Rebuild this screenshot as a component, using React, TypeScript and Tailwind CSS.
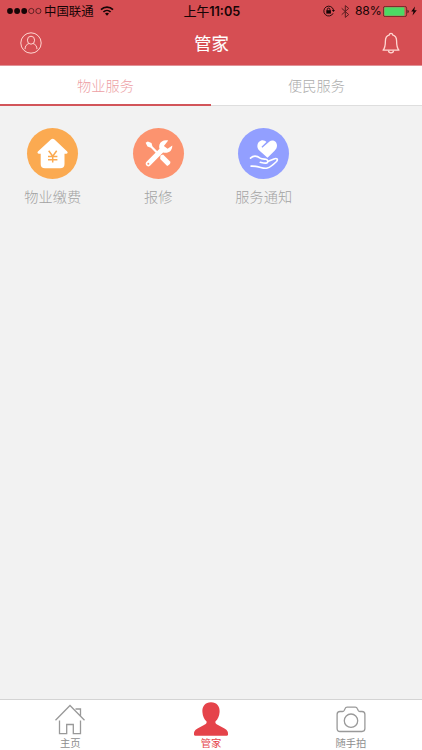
import type { ReactNode } from 'react';

interface Service {
  name: string;
  color: string;
  icon: ReactNode;
}

function StatusBar() {
  return (
    <div className="grid h-[21px] grid-cols-[1fr_auto_1fr] items-center text-[12px] leading-[20px] text-[#160506]">
      <div className="flex items-center pl-[7px]">
        <svg width="35" height="8" viewBox="0 0 35 8" fill="currentColor">
          <circle cx="3" cy="4" r="2.9" />
          <circle cx="10.1" cy="4" r="2.9" />
          <circle cx="17.2" cy="4" r="2.9" />
          <circle cx="24.3" cy="4" r="2.6" fill="none" stroke="currentColor" strokeWidth="0.6" />
          <circle cx="31.4" cy="4" r="2.6" fill="none" stroke="currentColor" strokeWidth="0.6" />
        </svg>
        <span className="ml-[2px] pt-[2px] text-[12.4px]">中国联通</span>
        <svg className="ml-[6px]" width="14" height="10" viewBox="0 0 14 10" fill="none" stroke="currentColor" strokeWidth="1.7">
          <path d="M1 3.6C4.3.3 9.7.3 13 3.6" />
          <path d="M3.4 6C5.4 4 8.6 4 10.6 6" />
          <path d="M7 9.7 5 7.6C6 6.6 8 6.6 9 7.6Z" fill="currentColor" stroke="none" />
        </svg>
      </div>
      <div className="pl-[2px] pt-px text-[12.7px] [-webkit-text-stroke:0.2px]">
        上午<span className="font-semibold [-webkit-text-stroke:0]">11:05</span>
      </div>
      <div className="flex items-center justify-end pr-[5px]">
        <svg width="12" height="12" viewBox="0 0 12 12" fill="none" stroke="currentColor">
          <path d="M10.1 8.3A4.9 4.9 0 1 1 10.5 5" strokeWidth="0.9" />
          <path d="M8.8 5h3.2l-1.6 2.1Z" fill="currentColor" stroke="none" />
          <rect x="3.3" y="5.2" width="4.6" height="3.4" fill="currentColor" stroke="none" />
          <path d="M4.3 5.5V4.4a1.3 1.3 0 0 1 2.6 0v1.1" strokeWidth="0.9" />
        </svg>
        <svg className="ml-[6px] opacity-65" width="9" height="13" viewBox="0 0 9 13" fill="none" stroke="currentColor" strokeWidth="1">
          <path d="m.7 3.3 7 6.3L4.3 12.4V.6l3.4 2.8-7 6.3" />
        </svg>
        <span className="ml-[5px] w-[27px] text-[12.2px] tracking-[-0.2px]">88%</span>
        <svg className="ml-[1px]" width="27" height="11" viewBox="0 0 27 11">
          <rect x="0.4" y="0.4" width="23.2" height="10.2" rx="1.8" fill="none" stroke="#4c1719" strokeWidth="0.7" />
          <rect x="1.3" y="1.3" width="20.2" height="8.4" rx="0.8" fill="#4cd964" />
          <path d="M24.6 3.8c1.4.5 1.4 2.9 0 3.4Z" fill="currentColor" />
        </svg>
        <svg className="ml-[1px]" width="6" height="10" viewBox="0 0 6 10" fill="currentColor">
          <path d="M4 .4.2 5.5h2.3L1.5 9.6 5.8 4.3H3.3Z" />
        </svg>
      </div>
    </div>
  );
}

function Header() {
  return (
    <header className="h-[66px] border-b border-[#e19297] bg-[#d64e53]">
      <StatusBar />
      <div className="flex h-[44px] items-center justify-between pl-[20px] pr-[22px] text-[#ffd7d2]">
        <svg width="22" height="22" viewBox="0 0 22 22" fill="none" stroke="currentColor" strokeWidth="1">
          <circle cx="11" cy="11" r="10.2" />
          <ellipse cx="11" cy="8.2" rx="3.6" ry="4" />
          <path d="M8.8 11.6c-2.4.9-3.7 2.4-3.8 5.6M13.2 11.6c2.4.9 3.7 2.4 3.8 5.6" />
        </svg>
        <h1 className="pr-px pt-px text-[17.4px] font-normal leading-[24px] text-white [-webkit-text-stroke:0.1px]">管家</h1>
        <svg width="18" height="22" viewBox="0 0 18 22" fill="none" stroke="currentColor" strokeWidth="1.3" strokeLinejoin="round">
          <path d="M7.4 2.9a1.6 1.6 0 1 1 3.2 0c2.8.8 4 3.1 4 6.1 0 4.7.5 7.2 2.3 9.2H1.1C2.9 16.2 3.4 13.7 3.4 9c0-3 1.2-5.3 4-6.1Z" />
          <path d="M6.5 18.5a2.5 2.3 0 0 0 5 0" />
        </svg>
      </div>
    </header>
  );
}

function Tabs() {
  return (
    <nav className="grid h-[40px] grid-cols-2 border-b border-[#dedede] bg-white text-center font-['Noto_Sans_CJK_SC_Light','Noto_Sans_CJK_SC',sans-serif] text-[14.2px] font-light">
      <button className="h-[39.5px] border-b-2 border-[#d2555a] leading-[38px] text-[#eda0a5]">物业服务</button>
      <button className="h-[39.5px] border-b-2 border-transparent leading-[38px] text-[#acacac]">便民服务</button>
    </nav>
  );
}

const services: Service[] = [
  {
    name: '物业缴费',
    color: 'bg-[#fbaa51]',
    icon: (
      <>
        <path
          d="M23.9 11.5q1.8-1.5 3.6 0L40.2 23.6q1.2 1.9-1 2.1h-1.7V36q0 4.3-4.3 4.3H18q-4.3 0-4.3-4.3V25.7H12q-2.3-.2-1.1-2.1Z"
          fill="#fff"
        />
        <path d="m21.7 22.8 4 5.5 4-5.5M25.7 28v6.4M21 28.6h9.4M21 31.7h9.4" fill="none" stroke="#fbaa51" strokeWidth="1.5" />
      </>
    ),
  },
  {
    name: '报修',
    color: 'bg-[#fc936f]',
    icon: (
      <>
        {/* 螺丝刀 */}
        <path d="m12.6 14.8 2.2-1.3 3.7 1.5.9 3.3 7.3 7.4-1.5 1.5-7.4-7.5-3.3-1.2Z" fill="#fff" />
        <path d="m27.4 27.6 2.7-1.1 7.2 7.3q.6 2.6-3.1 4.2l-7-7.1Z" fill="#fff" />
        {/* 扳手 */}
        <path
          d="M35.2 12.5c-3.5-1-7.7.3-8.8 4.3q-.5 2 .1 4L13.3 34.1c-1.9 2.4 1.1 5.6 3.7 3.7l13.1-13.3c5.5 1.2 9.3-1.8 9.2-7.1l-4.7 3.4-3.7-2.9Z"
          fill="#fff"
        />
        <circle cx="15.3" cy="35.8" r="1" fill="#fc936f" />
      </>
    ),
  },
  {
    name: '服务通知',
    color: 'bg-[#929fff]',
    icon: (
      <>
        <path
          d="M29.5 29.8 21.3 22.5c-3.4-3.3-2-8.8 1.9-10 2.1-.6 3.9.2 5.2 1.6l-4.9 4.6.8 1.1 7.2-6.2c2.9-2.4 7.5-.2 7.5 4 0 2.3-.9 3.7-2.4 5.2Z"
          fill="#fff"
        />
        <g fill="none" stroke="#fff" strokeWidth="1.6" strokeLinecap="round" strokeLinejoin="round">
          <path d="M12.5 30.1c3.5-3.4 6.6-2.3 9.7 0 1.5 1 3.9.9 5.7 1.2 2.5.6 2.6 3.5.2 3.8-2.1.2-4-.4-5.8-.8" />
          <path d="M29.7 33.6 36 30.9c2.6-1 4.6.3 2.5 2.6-3.3 3.3-5.9 5.7-9.2 6.6-4.9 1.3-7.5-2.3-16.2-2" />
        </g>
      </>
    ),
  },
];

function ServiceGrid() {
  return (
    <main className="grid flex-1 grid-cols-4 content-start pt-[21.5px]">
      {services.map((item) => (
        <button key={item.name} className="flex flex-col items-center">
          <span className={`size-[51px] rounded-full ${item.color}`}>
            <svg width="51" height="51" viewBox="0 0 51 51">
              {item.icon}
            </svg>
          </span>
          <span className="mt-[7px] whitespace-nowrap font-['Noto_Sans_CJK_SC_Light','Noto_Sans_CJK_SC',sans-serif] text-[14.2px] font-light leading-[20px] text-[#a2a2a2]">
            {item.name}
          </span>
        </button>
      ))}
    </main>
  );
}

function BottomBar() {
  return (
    <footer className="grid h-[51px] grid-cols-3 border-t border-[#d4d4d4] bg-white text-[10.3px] leading-[14px] text-[#8e8e8e]">
      <button className="flex flex-col items-center pt-[3px]">
        <svg width="32" height="33" viewBox="0 0 32 33" fill="none" stroke="#999" strokeWidth="1.3">
          <path d="M1.5 17.2 16 2.5l14.5 14.7M21.5 6h5v7" />
          <path d="M5.5 17.5v13.2h7.2v-9.2h6.6v9.2h7.2V17.5" />
        </svg>
        <span>主页</span>
      </button>
      <button className="flex flex-col items-center pt-[2px] text-[#e5434a]">
        <svg width="36" height="34" viewBox="0 0 36 34" fill="currentColor">
          <path d="M18 .3c5.7 0 9 4 8.6 9.7-.3 4.3-1.8 7.3-4.2 9.5-.3 1.6.5 2.3 2.6 3.5l6.5 3.6c3 1.7 3.8 3.5 3.5 6.2q-.2 1-1.4 1H2.4q-1.2 0-1.4-1c-.3-2.7.5-4.5 3.5-6.2L11 23c2.1-1.2 2.9-1.9 2.6-3.5C11.2 17.3 9.7 14.3 9.4 10 9 4.3 12.3.3 18 .3Z" />
        </svg>
        <span>管家</span>
      </button>
      <button className="flex flex-col items-center pr-[1.5px] pt-[3px]">
        <svg width="30" height="33" viewBox="0 0 30 33" fill="none" stroke="#999" strokeWidth="1.3" strokeLinejoin="round">
          <path d="M4 8.5h2.5q1.2 0 1.8-1.2l.7-1.6q.6-1.5 2.2-1.5h8q1.6 0 2.2 1.5l.7 1.6q.6 1.2 1.8 1.2H26q2.9 0 2.9 2.9V25.6q0 2.9-2.9 2.9H4q-2.9 0-2.9-2.9V11.4q0-2.9 2.9-2.9Z" />
          <circle cx="15" cy="17.7" r="6.7" />
        </svg>
        <span>随手拍</span>
      </button>
    </footer>
  );
}

export default function App() {
  return (
    <div className="flex h-screen w-full flex-col overflow-hidden bg-[#f2f2f2] font-['Inter','Noto_Sans_CJK_SC',sans-serif]">
      <Header />
      <Tabs />
      <ServiceGrid />
      <BottomBar />
    </div>
  );
}
